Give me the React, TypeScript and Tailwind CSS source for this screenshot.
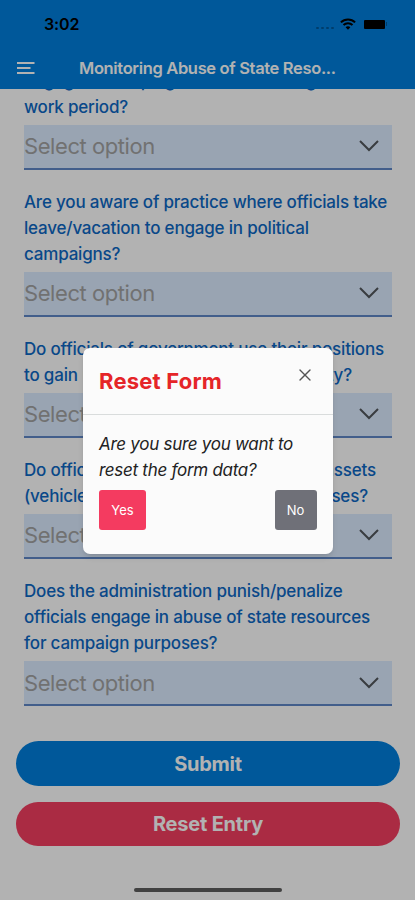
import { X } from "lucide-react";

const questions = [
  { id: 1, lines: ["engage in campaign activities during", "work period?"] },
  {
    id: 2,
    lines: [
      "Are you aware of practice where officials take",
      "leave/vacation to engage in political",
      "campaigns?",
    ],
  },
  {
    id: 3,
    lines: ["Do officials of government use their positions", "to gain undue advantages for their party?"],
  },
  {
    id: 4,
    lines: ["Do officials of government use public assets", "(vehicles, phones) for campaign purposes?"],
  },
  {
    id: 5,
    lines: [
      "Does the administration punish/penalize",
      "officials engage in abuse of state resources",
      "for campaign purposes?",
    ],
  },
];

function StatusBar() {
  return (
    <div className="flex h-[48px] items-center justify-between pl-[44px] pr-[28px] text-black">
      <span className="text-[16px] font-semibold leading-none tracking-[-0.1px]">3:02</span>
      <div className="flex items-center">
        <div className="mr-[6px] mt-[8px] flex gap-[2px]">
          <span className="h-[2px] w-[3px] rounded-full bg-black/30" />
          <span className="h-[2px] w-[3px] rounded-full bg-black/30" />
          <span className="h-[2px] w-[3px] rounded-full bg-black/30" />
          <span className="h-[2px] w-[3px] rounded-full bg-black/30" />
        </div>
        <svg width="16" height="12" viewBox="0 0 16 12" fill="none" stroke="currentColor" strokeWidth="2">
          <path d="M0.9 4.4C4.8 0.4 11.2 0.4 15.1 4.4" />
          <path d="M3.5 7C6 4.5 10 4.5 12.5 7" />
          <path d="M8 11.8L5.6 9.3C6.9 8 9.1 8 10.4 9.3Z" fill="currentColor" stroke="none" />
        </svg>
        <span className="ml-[8px] h-[9px] w-[21px] rounded-[1px] bg-black" />
        <span className="ml-px h-[4px] w-px bg-black/30" />
      </div>
    </div>
  );
}

function Header() {
  return (
    <header className="relative z-10 h-[88.5px] shrink-0 bg-[#007fdd]">
      <StatusBar />
      <div className="flex h-[40px] items-center">
        <button className="ml-[17px] w-[62px]">
          <svg width="18" height="14" viewBox="0 0 18 14" fill="none" stroke="#fff" strokeWidth="2">
            <path d="M0 2H17.5M0 7H13.5M0 12H17.5" />
          </svg>
        </button>
        <h1 className="whitespace-nowrap text-[16.5px] font-semibold tracking-[-0.34px] text-white">
          Monitoring Abuse of State Reso...
        </h1>
      </div>
    </header>
  );
}

function SelectField({ lines }: { lines: string[] }) {
  return (
    <div className="mb-[19.3px]">
      <label className="block whitespace-nowrap text-[17px] font-[450] leading-[26px] tracking-[-0.19px] text-[#0d68c4]">
        {lines.map((line) => (
          <span key={line} className="block">
            {line}
          </span>
        ))}
      </label>
      <div className="mt-[4.4px] flex h-[45.4px] items-center justify-between border-b-[2.5px] border-[#5f87c8] bg-[#dcebff] pr-[13px]">
        <span className="mt-px text-[22px] tracking-[-0.43px] text-[#a3a3a3]">Select option</span>
        <svg width="20" height="12" viewBox="0 0 20 12" fill="none" stroke="#52575c" strokeWidth="2">
          <path d="M1 1L10 10L19 1" />
        </svg>
      </div>
    </div>
  );
}

function ResetModal() {
  return (
    <div className="absolute inset-0 z-20 bg-black/30">
      <div className="ml-[83px] mt-[348px] flex h-[205.5px] w-[249.5px] flex-col rounded-[7px] bg-[#fbfbfb] shadow-md">
        <div className="flex h-[66.5px] justify-between border-b border-[#d9dcdc] pl-4 pr-[18px]">
          <h2 className="mt-[17px] text-[22px] font-bold leading-[32px] tracking-[0.22px] text-[#e52528]">
            Reset Form
          </h2>
          <X className="mt-[17px] text-[#555]" size={20} strokeWidth={1.6} />
        </div>
        <div className="px-4 pt-[16.5px]">
          <p className="whitespace-nowrap text-[17px] italic leading-[26px] tracking-[-0.28px] text-[#222]">
            Are you sure you want to
            <br />
            reset the form data?
          </p>
          <div className="mt-[7px] flex justify-between">
            <button className="h-[40px] w-[47px] rounded-[3px] bg-[#f43b60] pt-px text-[13px] text-white">Yes</button>
            <button className="h-[40px] w-[42px] rounded-[3px] bg-[#6f7078] pt-px text-[13px] text-white">No</button>
          </div>
        </div>
      </div>
    </div>
  );
}

export default function App() {
  return (
    <div className="relative flex h-[900px] w-[415px] flex-col overflow-hidden bg-white font-['Inter',sans-serif]">
      <Header />
      <main className="-mt-[20.4px] px-[24px] pr-[23px]">
        {questions.map((q) => (
          <SelectField key={q.id} lines={q.lines} />
        ))}
      </main>
      <div className="mt-[15.6px] flex flex-col gap-[16px] px-[16px] pr-[15px]">
        <button className="h-[44.5px] w-full rounded-full bg-[#007fdd] pt-px text-[20px] font-bold tracking-[-0.25px] text-white">
          Submit
        </button>
        <button className="h-[44.5px] w-full rounded-full bg-[#f43e60] pt-px text-[20px] font-bold tracking-[-0.2px] text-white">
          Reset Entry
        </button>
      </div>
      <div className="mx-auto mb-[8px] mt-auto h-[4px] w-[148px] rounded-full bg-[#5d5d5d]" />
      <ResetModal />
    </div>
  );
}
